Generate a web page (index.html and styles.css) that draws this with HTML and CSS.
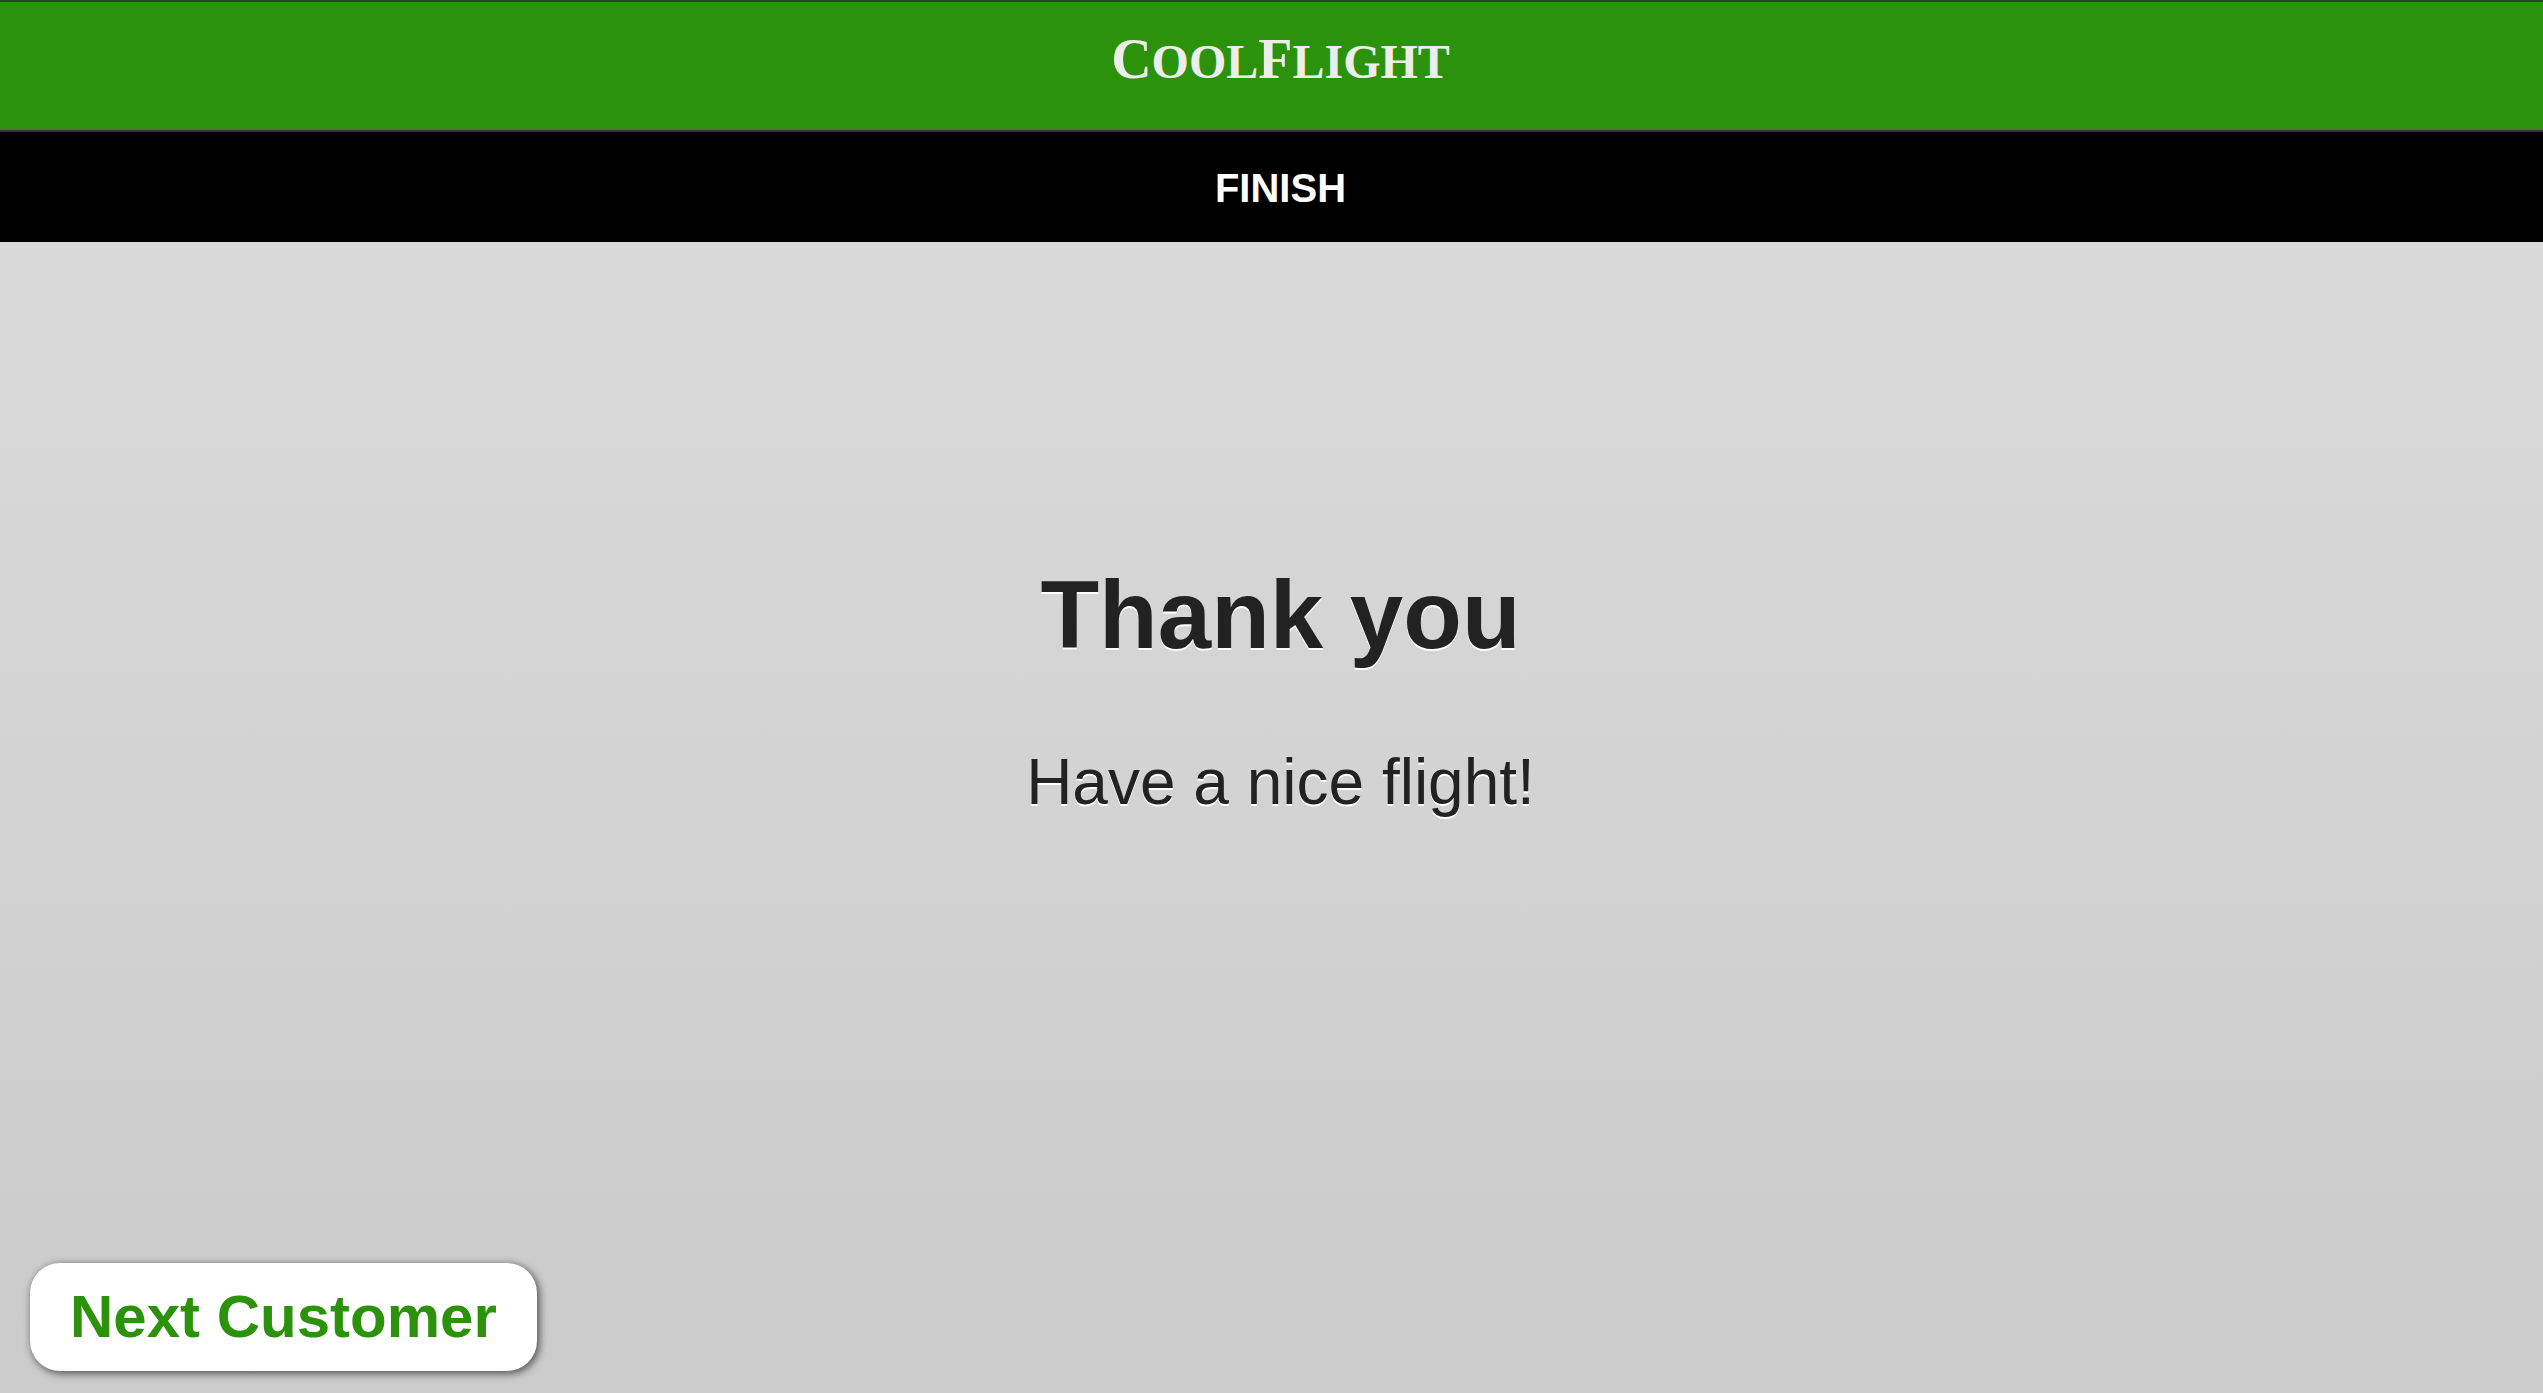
FILE: index.html
```html
<!DOCTYPE html>
<html lang="en">
<head>
<meta charset="utf-8">
<title>CoolFlight</title>
<link rel="stylesheet" href="styles.css">
</head>
<body>
<header class="brand"><span class="logo">C<span class="small">ool</span>F<span class="small">light</span></span></header>
<div class="step"><h1 class="step-title">FINISH</h1></div>
<div class="page">
<main class="content">
<h2 class="title">Thank you</h2>
<p class="message">Have a nice flight!</p>
</main>
<footer class="actions"><button class="next" type="button">Next Customer</button></footer>
</div>
</body>
</html>
```
FILE: styles.css
```css
* { box-sizing: border-box; }
body {
  margin: 0;
  min-height: 100vh;
  display: flex;
  flex-direction: column;
  font-family: "Liberation Sans", Arial, sans-serif;
  color: #222;
  background: #ccc;
}
.brand {
  padding: 27px 0 41px 18px;
  border-top: 2px solid #3b363b;
  border-bottom: 2px solid #333;
  background: #2c920b;
  text-align: center;
}
.logo {
  display: block;
  font: bold 56px/60px "Liberation Serif", "Times New Roman", serif;
  color: #ebeeea;
}
.small { font-size: 48px; line-height: 1; text-transform: uppercase; }
.step {
  padding: 26px 0 24px 18px;
  background: #000;
  text-align: center;
}
.step-title {
  margin: 0;
  font-size: 40px;
  line-height: 60px;
  color: #fff;
}
.page {
  flex: 1;
  display: flex;
  flex-direction: column;
  background: linear-gradient(#dadada, #cbcbcb);
}
.content {
  flex: 1;
  padding: 313px 0 60px 18px;
  text-align: center;
  text-shadow: 0 2px 0 #fff;
}
.title { margin: 0; font-size: 96px; line-height: 120px; }
.message { margin: 67px 0 0; font-size: 64px; line-height: 80px; }
.actions { display: flex; padding: 0 30px 22px; }
.next {
  padding: 0 40px;
  border: 0;
  border-radius: 30px;
  background: #fff;
  color: #2c920b;
  font: bold 60px/108px "Liberation Sans", Arial, sans-serif;
  box-shadow: 2px 2px 8px #000a;
}
```
